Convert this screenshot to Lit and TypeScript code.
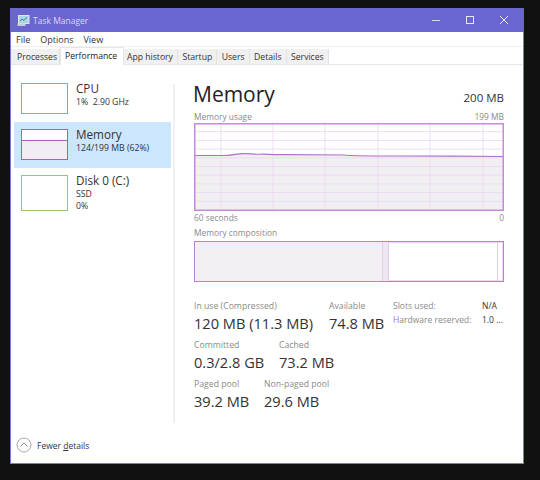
import { LitElement, html, css, svg } from "lit";
import { customElement } from "lit/decorators.js";

const G = 310, H = 88;

@customElement("app-root")
export class AppRoot extends LitElement {
  static styles = css`
    :host { display: block; width: 540px; height: 480px; background: #111; font-family: "Open Sans", "Noto Sans", sans-serif; color: #222; overflow: hidden; }
    * { box-sizing: border-box; }
    .page { padding: 8px 16px 0 10px; }
    .win { width: 514px; height: 456px; border: 1px solid #7d7ad6; border-top: 0; background: #fff; display: flex; flex-direction: column; }
    .title { height: 24px; margin: 0 -1px; background: #6a66d0; display: flex; align-items: center; color: #d9d8f3; font-size: 8.5px; padding-left: 7px; flex: none; }
    .title .name { margin-left: 3px; flex: 1; }
    .ctl { width: 34px; display: flex; justify-content: center; }
    .ctls { display: flex; margin-right: 3px; }
    .menu { height: 14px; display: flex; gap: 10px; padding-left: 5px; font-size: 9px; align-items: center; flex: none; color: #333; }
    .tabs { height: 19px; display: flex; align-items: flex-end; border-bottom: 1px solid #e8e8e8; border-top: 1px solid #f0f0f0; flex: none; font-size: 8.65px; }
    .tab { height: 15px; padding: 0 4.25px; background: #f0f0f0; border-right: 1px solid #e2e2e2; display: flex; align-items: center; color: #333; white-space: nowrap; }
    .tab.lead { padding: 0 3px 0 6px; width: 49px; }
    .tab.on { height: 18px; width: 64px; background: #fff; border: 1px solid #e6e6e6; border-bottom: 0; margin-bottom: -1px; padding: 2px 0 0 4px; color: #222; align-items: flex-start; }
    .tab.after { padding-left: 3px; }
    .body { flex: 1; display: flex; min-height: 0; padding-top: 16px; }
    .side { width: 162px; padding: 0 0 0 3px; flex: none; display: flex; flex-direction: column; }
    .item { width: 157px; height: 46px; display: flex; gap: 8px; padding: 7px 0 0 7px; }
    .item.first { height: 40px; padding-top: 2px; }
    .item.sel { background: #cce6ff; margin-top: 1px; }
    .thumb { width: 47px; height: 31px; border: 1px solid; flex: none; background: #fff; display: flex; flex-direction: column; }
    .thumb.disk { height: 36px; border-color: #92c878; }
    .thumb.cpu { border-color: #74aed6; }
    .thumb.mem { border-color: #a85fc4; }
    .thumb.mem .used { margin-top: 10px; flex: 1; background: #f1eef3; border-top: 1px solid #a85fc4; }
    .iname { font-size: 11.7px; line-height: 16px; color: #333; margin-top: -3.5px; }
    .disk-text { margin-top: .5px; }
    .isub { font-size: 8.7px; line-height: 12px; color: #333; white-space: nowrap; }
    .rule { width: 2px; height: 339px; background: #f0f0f0; flex: none; margin-top: 3px; }
    .main { width: 310px; margin-left: 19px; flex: none; display: flex; flex-direction: column; margin-top: -2px; }
    .head { display: flex; justify-content: space-between; align-items: flex-end; height: 28px; margin-left: -1px; }
    .h1 { font-size: 21px; line-height: 26px; color: #222; }
    .cap { font-size: 11.5px; line-height: 18px; color: #333; }
    .lbl { display: flex; justify-content: space-between; font-size: 8.4px; color: #8a8a8a; line-height: 12px; height: 12px; white-space: nowrap; }
    .m4 { margin-top: 4px; }
    .m3 { margin-top: 3px; }
    .m1 { margin-top: 1px; }
    .graph { display: block; }
    .comp { height: 41px; border: 1px solid #bb7fd0; box-shadow: inset 0 0 0 1px #ecd9f3; margin-top: 2px; display: flex; background: #fff; }
    .c1 { width: 187px; background: #f1eff2; }
    .c2 { width: 7px; background: #eee6f1; border-left: 1px solid #e3cdeb; border-right: 1px solid #e3cdeb; }
    .c3 { width: 108px; }
    .c4 { width: 1px; background: #e3cdeb; }
    .stats { margin-top: 17px; display: flex; flex-direction: column; gap: 5px; }
    .row { display: flex; }
    .s .k { font-size: 8.7px; line-height: 14px; color: #8a8a8a; white-space: nowrap; }
    .s .v { font-size: 14.6px; line-height: 20px; color: #333; white-space: nowrap; }
    .w135 { width: 135px; }
    .w64 { width: 64px; }
    .w85 { width: 85px; }
    .w70 { width: 70px; }
    .hw { display: flex; flex-direction: column; gap: 2px; padding-top: 1px; font-size: 8.5px; line-height: 12px; color: #8a8a8a; }
    .hw div { display: flex; white-space: nowrap; }
    .hw span { width: 89px; }
    .hw b { font-weight: 400; color: #333; }
    .foot { height: 36px; flex: none; display: flex; align-items: center; padding: 0 0 0 5px; gap: 5px; font-size: 8.5px; color: #333; }
    .foot u { text-underline-offset: 1px; }
  `;

  graph() {
    const vs = [27, 79, 131, 184, 236, 289];
    const hs = [1, 2, 3, 4, 5, 6, 7, 8, 9].map((i) => i * 8.7);
    const line = "M0 32.5 L30 32.5 C36 32.5 42 31 50 30.6 C56 30.2 60 31.6 68 31.2 C72 30.8 76 32 90 31.6 L150 32 C156 33 162 33 200 33 C230 33 245 33 260 33.2 L310 33.5";
    return html`<svg class="graph" width=${G} height=${H} viewBox="0 0 ${G} ${H}">
      ${svg`<rect width=${G} height=${H} fill="#fff"/>
      <path d="${line} L310 ${H} L0 ${H} Z" fill="#f1eff2"/>
      ${hs.map((y) => svg`<line x1="0" x2=${G} y1=${y} y2=${y} stroke="#ecdcf2"/>`)}
      ${vs.map((x) => svg`<line x1=${x} x2=${x} y1="0" y2=${H} stroke="#ecdcf2"/>`)}
      <path d=${line} fill="none" stroke="#b36fcb" stroke-width="1.2"/>
      <rect x=".75" y=".75" width=${G - 1.5} height=${H - 1.5} fill="none" stroke="#c58ada" stroke-width="1.5"/>`}
    </svg>`;
  }

  stat(k: string, v: string, c = "") {
    return html`<div class="s ${c}"><div class="k">${k}</div><div class="v">${v}</div></div>`;
  }

  render() {
    return html`<div class="page"><div class="win">
      <div class="title">
        <svg width="13" height="13" viewBox="0 0 13 13">
          <rect x="1.5" y="1.5" width="10.5" height="8" fill="#a9d4ee" stroke="#dfe6f2"/>
          <path d="M3 7 L5 5 L7 6.5 L10 3" fill="none" stroke="#3f8f6a" stroke-width="1"/>
          <rect x="0.5" y="9.5" width="8" height="2.5" fill="#c8cbd8"/>
        </svg>
        <span class="name">Task Manager</span>
        <div class="ctls">
          <div class="ctl"><svg width="10" height="10"><line x1="1" x2="9" y1="5.5" y2="5.5" stroke="#d9d8f3"/></svg></div>
          <div class="ctl"><svg width="10" height="10"><rect x="1.5" y="1.5" width="7" height="7" fill="none" stroke="#e6e5f7"/></svg></div>
          <div class="ctl"><svg width="10" height="10"><path d="M1 1 L9 9 M9 1 L1 9" stroke="#e6e5f7"/></svg></div>
        </div>
      </div>
      <div class="menu"><span>File</span><span>Options</span><span>View</span></div>
      <div class="tabs">
        <div class="tab lead">Processes</div>
        <div class="tab on">Performance</div>
        <div class="tab after">App history</div>
        <div class="tab">Startup</div>
        <div class="tab">Users</div>
        <div class="tab">Details</div>
        <div class="tab">Services</div>
      </div>
      <div class="body">
        <div class="side">
          <div class="item first"><div class="thumb cpu"></div><div><div class="iname">CPU</div><div class="isub">1%&nbsp; 2.90 GHz</div></div></div>
          <div class="item sel"><div class="thumb mem"><div class="used"></div></div><div><div class="iname">Memory</div><div class="isub">124/199 MB (62%)</div></div></div>
          <div class="item"><div class="thumb disk"></div><div class="disk-text"><div class="iname">Disk 0 (C:)</div><div class="isub">SSD</div><div class="isub">0%</div></div></div>
        </div>
        <div class="rule"></div>
        <div class="main">
          <div class="head"><span class="h1">Memory</span><span class="cap">200 MB</span></div>
          <div class="lbl m4"><span>Memory usage</span><span>199 MB</span></div>
          ${this.graph()}
          <div class="lbl m1"><span>60 seconds</span><span>0</span></div>
          <div class="lbl m3"><span>Memory composition</span></div>
          <div class="comp"><div class="c1"></div><div class="c2"></div><div class="c3"></div><div class="c4"></div></div>
          <div class="stats">
            <div class="row">
              ${this.stat("In use (Compressed)", "120 MB (11.3 MB)", "w135")}
              ${this.stat("Available", "74.8 MB", "w64")}
              <div class="hw">
                <div><span>Slots used:</span><b>N/A</b></div>
                <div><span>Hardware reserved:</span><b>1.0 ...</b></div>
              </div>
            </div>
            <div class="row">
              ${this.stat("Committed", "0.3/2.8 GB", "w85")}
              ${this.stat("Cached", "73.2 MB")}
            </div>
            <div class="row">
              ${this.stat("Paged pool", "39.2 MB", "w70")}
              ${this.stat("Non-paged pool", "29.6 MB")}
            </div>
          </div>
        </div>
      </div>
      <div class="foot">
        <svg width="16" height="16" viewBox="0 0 16 16"><circle cx="8" cy="8" r="7" fill="#fff" stroke="#aaa"/><path d="M4.5 9.5 L8 6 L11.5 9.5" fill="none" stroke="#888" stroke-width="1"/></svg>
        <span>Fewer <u>d</u>etails</span>
      </div>
    </div></div>`;
  }
}
